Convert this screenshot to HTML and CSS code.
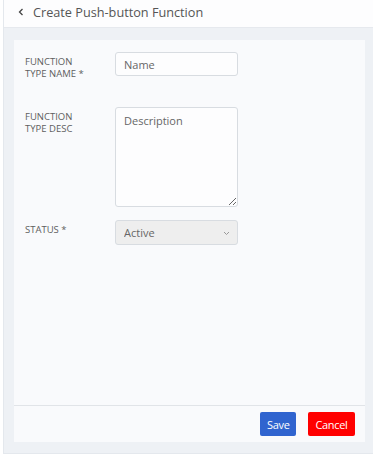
FILE: index.html
```html
<!DOCTYPE html>
<html lang="en">
<head>
    <meta charset="UTF-8">
    <title>Create Push-button Function</title>
    <link rel="stylesheet" href="styles.css">
</head>
<body>
    <div class="pagina">
        <header class="topo">
            <span class="voltar">
                <svg width="6" height="8" viewBox="0 0 6 8"><path d="M4.5 1 L1.5 4 L4.5 7" fill="none" stroke="#444" stroke-width="1.3"/></svg>
            </span>
            <h1>Create Push-button Function</h1>
        </header>

        <main class="conteudo">
            <div class="cartao">
                <form class="formulario">
                    <div class="linha linha-nome">
                        <label for="nome">FUNCTION<br>TYPE NAME *</label>
                        <input type="text" id="nome" placeholder="Name">
                    </div>
                    <div class="linha">
                        <label for="desc">FUNCTION<br>TYPE DESC</label>
                        <textarea id="desc" placeholder="Description"></textarea>
                    </div>
                    <div class="linha">
                        <label for="status">STATUS *</label>
                        <div class="caixa-select">
                            <select id="status">
                                <option>Active</option>
                                <option>Inactive</option>
                            </select>
                            <svg class="seta" width="7" height="5" viewBox="0 0 7 5"><path d="M1 1 L3.5 3.5 L6 1" fill="none" stroke="#999" stroke-width="1"/></svg>
                        </div>
                    </div>
                </form>
                <div class="rodape">
                    <button type="button" class="btn salvar">Save</button>
                    <button type="button" class="btn cancelar">Cancel</button>
                </div>
            </div>
        </main>
    </div>
</body>
</html>
```

FILE: styles.css
```css
body {
    margin: 0;
    padding: 0;
    background-color: #ffffff;
    font-family: "Open Sans", Arial, sans-serif;
    color: #555;
}
.pagina {
    margin-left: 3px;
    height: 453px;
    border-left: 1px solid #e4e8ed;
    border-bottom: 1px solid #e4e8ed;
    background-color: #eef1f5;
    display: flex;
    flex-direction: column;
}
.topo {
    height: 27px;
    background-color: #fdfdfe;
    border-bottom: 1px solid #e6e9ee;
    display: flex;
    align-items: center;
}
.voltar {
    width: 6px;
    height: 8px;
    margin-left: 14px;
    margin-top: -3px;
    display: flex;
}
.topo h1 {
    margin: 0 0 0 9px;
    font-size: 12.7px;
    font-weight: normal;
    line-height: 24px;
    padding-bottom: 3px;
    color: #555;
}
.conteudo {
    flex: 1;
    padding: 12px 8px 11px 10px;
    display: flex;
}
.cartao {
    flex: 1;
    background-color: #f9fafc;
    display: flex;
    flex-direction: column;
}
.formulario {
    flex: 1;
    padding: 12px 11px;
}
.linha {
    display: flex;
    align-items: flex-start;
    margin-bottom: 13px;
}
.linha-nome {
    margin-bottom: 27px;
}
.linha label {
    width: 90px;
    padding-top: 4px;
    font-size: 9.5px;
    line-height: 12px;
    color: #5e5e5e;
}
input, textarea, select {
    box-sizing: border-box;
    width: 123px;
    font-family: "Open Sans", Arial, sans-serif;
    font-size: 11px;
    color: #666;
    border: 1px solid #d8dce1;
    border-radius: 3px;
    background-color: #fdfdfe;
    margin: 0;
}
input {
    height: 24px;
    padding: 0 8px;
}
textarea {
    display: block;
    height: 100px;
    padding: 5px 8px;
    resize: vertical;
}
input::placeholder, textarea::placeholder {
    color: #666;
}
.caixa-select {
    position: relative;
    width: 123px;
    height: 25px;
}
select {
    height: 25px;
    padding: 0 8px;
    appearance: none;
    background-color: #eeeeee;
    color: #666;
}
.seta {
    position: absolute;
    right: 8px;
    top: 11px;
}
.rodape {
    border-top: 1px solid #e1e4e8;
    padding: 6px 10px 6px;
    display: flex;
    justify-content: flex-end;
    gap: 12px;
}
.btn {
    height: 24px;
    border: none;
    border-radius: 2px;
    color: #fff;
    font-family: "Open Sans", Arial, sans-serif;
    font-size: 11px;
    letter-spacing: -0.3px;
    padding: 0 7px;
}
.salvar {
    width: 36px;
    background-color: #3064cf;
}
.cancelar {
    width: 47px;
    background-color: #ff0000;
}
```
